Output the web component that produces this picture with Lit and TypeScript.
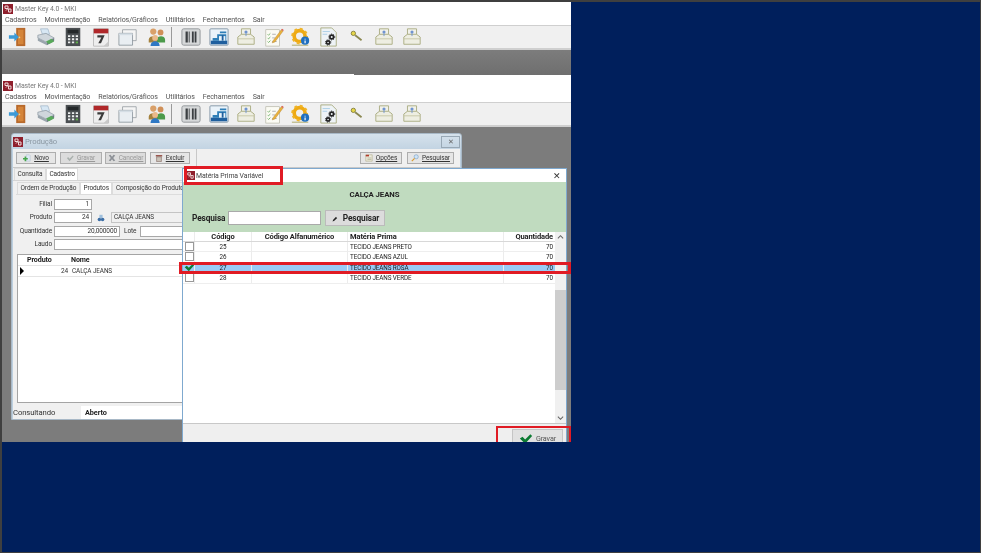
import { LitElement, html, css } from 'lit';
import { customElement } from 'lit/decorators.js';

const logo = html`<svg class="logo" viewBox="0 0 10 10">
  <rect width="10" height="10" fill="#8f1f2c"></rect>
  <path d="M2 2h3v2.500h-3zM5.500 5h2.500v3h-2.500zM3 6.500l2-2 1 1" fill="none" stroke="#f0dcdc" stroke-width="1"></path>
</svg>`;

const box = html`<svg class="wide-ic" viewBox="0 0 22 22">
  <path d="M6 2h10v7h-10z" fill="#f1f1ea" stroke="#a9ab80"></path>
  <path d="M2 11l4-3h10l4 3v8h-18z" fill="#eeeee2" stroke="#a9ab80"></path>
  <path d="M2 13h18" stroke="#c4c5a5"></path>
  <circle cx="11" cy="5.500" r="1.700" fill="#6f93d0"></circle>
  <path d="M11 7v3" stroke="#6f93d0"></path>
</svg>`;

const icons = [
  html`<svg viewBox="0 0 22 22">
    <path d="M9 1h10v20h-10z" fill="#b86a2c"></path>
    <path d="M11 3h6v16h-6z" fill="#d5853a"></path>
    <circle cx="12.500" cy="11.500" r="1" fill="#f2d08a"></circle>
    <path d="M1 9h6v-3l5 5-5 5v-3h-6z" fill="#3d9ad6"></path>
  </svg>`,
  html`<svg viewBox="0 0 22 22">
    <path d="M5 2h8l2 6h-8z" fill="#d7e7f4" stroke="#8aa3b8" stroke-width=".6"></path>
    <path d="M2 9l9-2 9 5-8 5-10-5z" fill="#cfd6dc" stroke="#77848f" stroke-width=".6"></path>
    <path d="M2 12l10 5v3l-10-5z" fill="#9aa5ad"></path>
    <path d="M12 17l8-5v3l-8 5z" fill="#6e7b84"></path>
    <path d="M11 16l6-3 3 3-6 3z" fill="#58a95a"></path>
  </svg>`,
  html`<svg viewBox="0 0 22 22">
    <rect x="3" y="1" width="16" height="20" fill="#4b4f52"></rect>
    <rect x="5" y="3" width="12" height="4" fill="#24282a"></rect>
    <path d="M5.500 9h2.500v2h-2.500zM9.800 9h2.500v2h-2.500zM14 9h2.500v2h-2.500zM5.500 12.500h2.500v2h-2.500zM9.800 12.500h2.500v2h-2.500zM14 12.500h2.500v2h-2.500zM5.500 16h2.500v2h-2.500zM9.800 16h2.500v2h-2.500z" fill="#eceeee"></path>
    <path d="M14 16h2.500v2h-2.500z" fill="#5fb04a"></path>
  </svg>`,
  html`<svg viewBox="0 0 22 22">
    <rect x="3" y="2" width="16" height="19" fill="#eeeeee" stroke="#9a9a9a" stroke-width=".6"></rect>
    <rect x="3" y="2" width="16" height="5" fill="#b0282a"></rect>
    <path d="M7 9h8l-4 9h-3l3.400-6.500h-4.400z" fill="#3a3a3a"></path>
    <path d="M14 21l5-5v5z" fill="#c9c9c9"></path>
  </svg>`,
  html`<svg viewBox="0 0 22 22">
    <path d="M5 3h15v12h-15z" fill="#f5f5f5" stroke="#8d9499" stroke-width=".8"></path>
    <path d="M1 7h15v13h-15z" fill="#e9eef2" stroke="#7c8790" stroke-width=".8"></path>
    <path d="M1 7h15v2h-15z" fill="#d5dee5"></path>
  </svg>`,
  html`<svg viewBox="0 0 22 22">
    <circle cx="8" cy="5" r="3.400" fill="#d9a069"></circle>
    <path d="M3 14c0-5 10-5 10 0v3h-10z" fill="#a4813c"></path>
    <circle cx="16" cy="6" r="3.200" fill="#cf8f58"></circle>
    <path d="M12 14c0-5 9-5 9 0v3h-9z" fill="#4c9a4b"></path>
    <circle cx="10" cy="12" r="3.200" fill="#eab98a"></circle>
    <path d="M5 21c0-7 10-7 10 0z" fill="#2f78c4"></path>
  </svg>`,
  null,
  html`<svg viewBox="0 0 22 22">
    <rect x="1" y="2" width="20" height="18" rx="2" fill="#d6d8d9" stroke="#8e9396"></rect>
    <path d="M5 5h2.500v12h-2.500zM8.500 5h1v12h-1zM12 5h2v12h-2zM15 5h2v12h-2z" fill="#3b3f42"></path>
  </svg>`,
  html`<svg viewBox="0 0 22 22">
    <rect x="1" y="2" width="20" height="18" rx="1" fill="#eaf3fa" stroke="#7f93a3"></rect>
    <path d="M2 15h18v4h-18z" fill="#1f5f9e"></path>
    <path d="M4 15v-3h5v-4h10v7zM12 5h7v2h-7z" fill="#2f7fb8"></path>
    <path d="M11 10h7v5h-7z" fill="#eaf3fa"></path>
    <path d="M14 9v6h2v-6z" fill="#1f5f9e"></path>
  </svg>`,
  box,
  html`<svg viewBox="0 0 22 22">
    <rect x="2" y="3" width="15" height="18" fill="#fbfbf4" stroke="#b0b0a0" stroke-width=".7"></rect>
    <path d="M4 8l1 1 2-2M4 12l1 1 2-2M4 16l1 1 2-2" fill="none" stroke="#5fa55a" stroke-width=".9"></path>
    <path d="M9 8h4M9 12h3M9 16h5" stroke="#9a9a9a" stroke-width=".8"></path>
    <path d="M10 15l9-12 2 1.500-9 12-3 1z" fill="#e9b23c" stroke="#a9772a" stroke-width=".4"></path>
    <path d="M19 3l2 1.500 .8-1.200-2-1.500z" fill="#d8574e"></path>
  </svg>`,
  html`<svg viewBox="0 0 22 22">
    <circle cx="9.500" cy="10" r="6" fill="none" stroke="#eeaa14" stroke-width="4"></circle>
    <circle cx="9.500" cy="10" r="8" fill="none" stroke="#f0b428" stroke-width="2.400" stroke-dasharray="3 3.280"></circle>
    <path d="M1 20h18" stroke="#a9a560" stroke-width="1"></path>
    <circle cx="15.500" cy="15" r="4.500" fill="#1f6fc0"></circle>
    <path d="M15.500 12.800v1M15.500 14.800v3" stroke="#fff" stroke-width="1.300"></path>
  </svg>`,
  html`<svg viewBox="0 0 22 22">
    <path d="M2 1h12l5 5v15h-17z" fill="#eef3f6" stroke="#a9ab80"></path>
    <path d="M4 5h8M4 8h5" stroke="#a9cde6"></path>
    <circle cx="14" cy="11" r="2" fill="none" stroke="#222" stroke-width="1.800"></circle>
    <circle cx="14" cy="11" r="3.300" fill="none" stroke="#222" stroke-width="1" stroke-dasharray="1.200 1.200"></circle>
    <circle cx="10" cy="17" r="1.800" fill="none" stroke="#222" stroke-width="1.800"></circle>
    <circle cx="10" cy="17" r="3" fill="none" stroke="#222" stroke-width="1" stroke-dasharray="1.200 1.200"></circle>
  </svg>`,
  html`<svg viewBox="0 0 22 22">
    <circle cx="7" cy="7" r="2.400" fill="#e6d64a" stroke="#6e6a2a" stroke-width=".8"></circle>
    <path d="M9 9l7 5.500" stroke="#8a8750" stroke-width="2"></path>
  </svg>`,
  box,
  box,
];

const pencil = html`<svg class="ic" viewBox="0 0 12 12">
  <path d="M1 11l1-3 5-5 2 2-5 5z" fill="#222"></path>
  <path d="M7 3l2-2 2 2-2 2z" fill="#ddd"></path>
</svg>`;

const check = html`<svg viewBox="0 0 16 12"><path d="M1 6l3-2 3 3 6-6 2 2-8 9z" fill="#0c7b32"></path></svg>`;

const chevron = (d: string) => html`<svg class="chev" viewBox="0 0 8 8">
  <path d=${d} fill="none" stroke="#666" stroke-width="1.200"></path>
</svg>`;

const btnIcons = {
  novo: html`<svg viewBox="0 0 10 10">
    <path d="M4 1h4l1 1v7h-5z" fill="#dce8f3" stroke="#a3b4c3" stroke-width=".5"></path>
    <path d="M0 5h2v-2h2v2h2v2h-2v2h-2v-2h-2z" fill="#45a54a"></path>
  </svg>`,
  gravar: html`<svg viewBox="0 0 10 10"><path d="M1 5l2-1 1.500 2 4-4 1 1-5 6z" fill="#a9b0ad"></path></svg>`,
  cancelar: html`<svg viewBox="0 0 10 10">
    <path d="M1 2l2-1 2 2.500 2-2.500 2 1-2.500 3 2.500 3-2 1-2-2.500-2 2.500-2-1 2.500-3z" fill="#8c9096"></path>
  </svg>`,
  excluir: html`<svg viewBox="0 0 10 10">
    <path d="M1 1.500h8v1.500h-8z" fill="#8a3328"></path>
    <path d="M2 3.500h6v6h-6z" fill="#c9c2b8" stroke="#6b4a42" stroke-width=".6"></path>
  </svg>`,
  opcoes: html`<svg viewBox="0 0 10 10">
    <path d="M1 1h8v8h-8z" fill="#ecebdc" stroke="#a39f73" stroke-width=".6"></path>
    <path d="M1 1h4v2h-4z" fill="#b23a2c"></path>
    <path d="M3 5h5M3 7h5" stroke="#8e8b66" stroke-width=".6"></path>
  </svg>`,
  pesquisar: html`<svg viewBox="0 0 10 10">
    <circle cx="6.500" cy="3.500" r="2.600" fill="#cfe4f6" stroke="#6b97c2" stroke-width=".7"></circle>
    <path d="M4.500 5.500l-3.500 3.500" stroke="#d99a2b" stroke-width="1.400"></path>
  </svg>`,
};

@customElement('main-bar')
class MainBar extends LitElement {
  static styles = css`
    :host {
      display: block;
      background: #fff;
    }
    :host(.second) {
      padding-top: 4px;
    }
    .title {
      display: flex;
      align-items: center;
      gap: 2px;
      height: 12px;
      padding: 1px 0 0 1px;
      box-sizing: border-box;
      color: #7a7a7a;
      font-size: 6.900px;
    }
    .logo {
      width: 10px;
      height: 10px;
    }
    .menu {
      display: flex;
      gap: 8px;
      height: 11px;
      padding-left: 3px;
      align-items: center;
      color: #555;
      font-size: 7.100px;
    }
    .tools {
      display: flex;
      align-items: center;
      height: 22px;
      padding-left: 6px;
      gap: 7.600px;
      background: #f0f0f0;
      border-top: 1px solid #cfcfcf;
      border-bottom: 2px solid #cfcfcf;
    }
    .tools svg {
      width: 20px;
      height: 20px;
      flex: none;
    }
    .sep {
      width: 1px;
      height: 20px;
      margin: 0 1.400px 0 -2.600px;
      background: #9a9a9a;
      flex: none;
    }
  `;

  render() {
    return html`
      <div class="title">${logo}<span>Master Key 4.0 - MKI</span></div>
      <div class="menu">
        ${['Cadastros', 'Movimentação', 'Relatórios/Gráficos', 'Utilitários', 'Fechamentos', 'Sair'].map(
          (m) => html`<span>${m}</span>`
        )}
      </div>
      <div class="tools">
        ${icons.map((i) => (i ? i : html`<span class="sep"></span>`))}
      </div>
    `;
  }
}

@customElement('producao-window')
class ProducaoWindow extends LitElement {
  static styles = css`
    :host {
      display: flex;
      flex-direction: column;
      position: absolute;
      left: 9px;
      top: 6px;
      width: 451px;
      height: 287px;
      box-sizing: border-box;
      background: linear-gradient(#d6e2ec, #bccfdf 20px);
      border: 1px solid #a8b8c6;
      border-radius: 3px 3px 0 0;
      font-size: 6.500px;
      color: #333;
    }
    .head {
      display: flex;
      align-items: center;
      gap: 2px;
      height: 15px;
      padding: 0 1px 0 1px;
      color: #8b98a3;
      font-size: 7.700px;
    }
    .logo {
      width: 10px;
      height: 10px;
    }
    .close {
      margin-left: auto;
      width: 17px;
      height: 10px;
      border: 1px solid #98a8b5;
      text-align: center;
      line-height: 10px;
      font-size: 7px;
      color: #666;
    }
    .body {
      flex: 1;
      display: flex;
      flex-direction: column;
      min-height: 0;
      margin: 0 1px;
      background: #f0f0f0;
    }
    .actions {
      display: flex;
      gap: 3.500px;
      height: 19px;
      align-items: center;
      padding: 0 6px 0 3px;
      flex: none;
      box-sizing: border-box;
      border-bottom: 1px solid #c8c8c8;
    }
    .btn {
      display: flex;
      align-items: center;
      justify-content: center;
      gap: 3px;
      height: 12px;
      box-sizing: border-box;
      background: #e6e6e6;
      border: 1px solid #adadad;
      color: #333;
    }
    .btn.off {
      color: #999;
      background: #dcdcdc;
    }
    .btn svg {
      width: 8px;
      height: 8px;
    }
    .w40 {
      width: 40px;
    }
    .w41 {
      width: 41px;
    }
    .w42 {
      width: 42px;
    }
    .w47 {
      width: 47px;
      margin-left: 1.500px;
    }
    .vsep {
      width: 1px;
      height: 19px;
      background: #c8c8c8;
      margin-left: 3px;
    }
    .spacer {
      flex: 1;
    }
    .tabs {
      display: flex;
      flex: none;
      height: 12px;
      padding-left: 1px;
      box-sizing: border-box;
    }
    .tab {
      padding: 0 2.500px;
      border: 1px solid #dcdcdc;
      border-bottom: none;
      line-height: 10px;
      background: #f0f0f0;
    }
    .tab.on {
      background: #fff;
    }
    .page {
      flex: 1;
      display: flex;
      flex-direction: column;
      min-height: 0;
      background: #f0f0f0;
      border-top: 1px solid #d4d4d4;
      padding: 0 3px 3px;
    }
    .tabs.sub {
      height: 13px;
      padding-top: 1px;
    }
    .form {
      display: grid;
      flex: none;
      grid-template-columns: 36px 38px 1fr;
      grid-auto-rows: 11px;
      gap: 2.300px 2px;
      padding-top: 4px;
      border-top: 1px solid #dcdcdc;
    }
    .lab {
      text-align: right;
      line-height: 11px;
    }
    .in {
      box-sizing: border-box;
      height: 11px;
      background: #fff;
      border: 1px solid #a8a8a8;
      line-height: 9px;
      text-align: right;
      padding-right: 2px;
    }
    .row3 {
      display: flex;
      align-items: center;
      gap: 6px;
      padding-left: 3px;
    }
    .row3 svg {
      width: 8px;
      height: 8px;
      flex: none;
    }
    .ro {
      flex: 1;
      box-sizing: border-box;
      height: 11px;
      background: #f0f0f0;
      border: 1px solid #c4c4c4;
      line-height: 9px;
      padding-left: 2px;
      font-size: 6.400px;
    }
    .wide {
      grid-column: 2 / 4;
    }
    .qty {
      display: flex;
      gap: 4px;
      align-items: center;
      grid-column: 2 / 4;
    }
    .qty .in {
      width: 66px;
      flex: none;
    }
    .qty .in.fill {
      flex: 1;
    }
    .grid {
      flex: 1;
      margin: 4px 0 0 1px;
      background: #fff;
      border: 1px solid #a4a4a4;
    }
    .g-head,
    .g-row {
      display: grid;
      grid-template-columns: 9px 44px 1fr;
      height: 11px;
      line-height: 10px;
      box-sizing: border-box;
      border-bottom: 1px solid #e4e4e4;
    }
    .g-head {
      font-weight: 700;
      font-size: 7.100px;
      color: #222;
    }
    .g-num {
      text-align: right;
      padding-right: 3px;
    }
    .g-name {
      padding-left: 1px;
      font-size: 6.400px;
    }
    .arrow {
      width: 0;
      height: 0;
      margin: 1px 0 0 2px;
      border-left: 4px solid #000;
      border-top: 4px solid transparent;
      border-bottom: 4px solid transparent;
    }
    .status {
      display: grid;
      flex: none;
      grid-template-columns: 68px 1fr;
      height: 13px;
      line-height: 13px;
      font-size: 7.700px;
      background: #f0f0f0;
    }
    .status b {
      background: #fff;
      padding-left: 4px;
      font-size: 7.300px;
      color: #222;
    }
  `;

  render() {
    return html`
      <div class="head">${logo}<span>Produção</span><span class="close">✕</span></div>
      <div class="body">
        <div class="actions">
          <span class="btn w40">${btnIcons.novo}<u>Novo</u></span>
          <span class="btn off w42">${btnIcons.gravar}<u>Gravar</u></span>
          <span class="btn off w41">${btnIcons.cancelar}<u>Cancelar</u></span>
          <span class="btn w40">${btnIcons.excluir}<u>Excluir</u></span>
          <span class="vsep"></span>
          <span class="spacer"></span>
          <span class="btn w42">${btnIcons.opcoes}<u>Opções</u></span>
          <span class="btn w47">${btnIcons.pesquisar}<u>Pesquisar</u></span>
        </div>
        <div class="tabs"><span class="tab">Consulta</span><span class="tab on">Cadastro</span></div>
        <div class="page">
          <div class="tabs sub">
            <span class="tab">Ordem de Produção</span><span class="tab on">Produtos</span
            ><span class="tab">Composição do Produto</span>
          </div>
          <div class="form">
            <span class="lab">Filial</span><span class="in">1</span><span></span>
            <span class="lab">Produto</span><span class="in">24</span>
            <span class="row3">
              <svg viewBox="0 0 10 10">
                <circle cx="3" cy="7" r="2.200" fill="#3d6ea5"></circle>
                <circle cx="7" cy="7" r="2.200" fill="#3d6ea5"></circle>
                <path d="M3 1h4v4h-4z" fill="#9fc0dd"></path>
              </svg>
              <span class="ro">CALÇA JEANS</span>
            </span>
            <span class="lab">Quantidade</span>
            <span class="qty"><span class="in">20,000000</span><span>Lote</span><span class="in fill"></span></span>
            <span class="lab">Laudo</span><span class="in wide"></span>
          </div>
          <div class="grid">
            <div class="g-head"><span></span><span>Produto</span><span>Nome</span></div>
            <div class="g-row">
              <span class="arrow"></span><span class="g-num">24</span><span class="g-name">CALÇA JEANS</span>
            </div>
          </div>
        </div>
        <div class="status"><span>Consultando</span><b>Aberto</b></div>
      </div>
    `;
  }
}

const rows = [
  { cod: 25, nome: 'TECIDO JEANS PRETO' },
  { cod: 26, nome: 'TECIDO JEANS AZUL' },
  { cod: 27, nome: 'TECIDO JEANS ROSA', sel: true },
  { cod: 28, nome: 'TECIDO JEANS VERDE' },
];

@customElement('materia-dialog')
class MateriaDialog extends LitElement {
  static styles = css`
    :host {
      display: flex;
      flex-direction: column;
      position: absolute;
      left: 180px;
      top: 41px;
      width: 385px;
      height: 290px;
      box-sizing: border-box;
      background: #fff;
      border: 1px solid #7fa9cf;
      font-size: 6.300px;
      color: #222;
    }
    .head {
      display: flex;
      flex: none;
      align-items: center;
      gap: 1px;
      height: 13px;
      padding: 0 5px 0 3px;
      font-size: 6.900px;
      color: #444;
    }
    .logo {
      width: 9px;
      height: 9px;
    }
    .x {
      margin-left: auto;
      font-size: 9px;
      color: #333;
    }
    .green {
      flex: none;
      height: 50px;
      background: #c0dbbf;
      display: flex;
      flex-direction: column;
      align-items: center;
    }
    .green h1 {
      margin: 8px 0 0;
      font-size: 7.800px;
      line-height: 10px;
      font-weight: 700;
    }
    .search {
      align-self: flex-start;
      display: flex;
      align-items: center;
      gap: 3px;
      margin: 10px 0 0 9px;
      font-weight: 700;
      font-size: 8.300px;
    }
    .search .in {
      width: 93px;
      height: 14px;
      box-sizing: border-box;
      background: #fff;
      border: 1px solid #aaa;
    }
    .search .btn {
      display: flex;
      align-items: center;
      justify-content: center;
      gap: 4px;
      width: 60px;
      height: 16px;
      box-sizing: border-box;
      margin-left: 1px;
      background: #dcdcdc;
      border: 1px solid #bbb;
    }
    .ic {
      width: 7px;
      height: 7px;
    }
    .table {
      flex: 1;
      display: flex;
      min-height: 0;
    }
    .rows {
      flex: 1;
    }
    .r {
      display: grid;
      grid-template-columns: 12px 57px 96px 156px 51px;
      height: 10.500px;
      line-height: 10px;
      box-sizing: border-box;
      border-bottom: 1px solid #eee;
    }
    .r.th {
      font-weight: 700;
      font-size: 7.500px;
      height: 9.500px;
      line-height: 9px;
      border-bottom: 1px solid #d8d8d8;
    }
    .r.sel {
      background: #99cbf5;
    }
    .r > span {
      border-right: 1px solid #ececec;
      white-space: nowrap;
    }
    .r > span:last-child {
      border-right: none;
    }
    .c {
      text-align: center;
    }
    .n {
      padding-left: 2px;
    }
    .q {
      text-align: right;
      padding-right: 2px;
    }
    .box {
      display: block;
      box-sizing: border-box;
      width: 9px;
      height: 9px;
      margin-left: 2px;
      background: #fff;
      border: 1px solid #999;
    }
    .tick {
      display: block;
      width: 11px;
      height: 9px;
      margin-left: 1px;
    }
    .scroll {
      width: 11px;
      background: #f0f0f0;
      display: flex;
      flex-direction: column;
      align-items: center;
    }
    .chev {
      width: 7px;
      height: 11px;
      flex: none;
    }
    .scroll .thumb {
      width: 100%;
      height: 100px;
      margin-top: 47px;
      background: #cdcdcd;
    }
    .scroll .spacer {
      flex: 1;
    }
    .foot {
      flex: none;
      height: 34px;
      display: flex;
      justify-content: flex-end;
      background: #efefef;
      border-top: 1px solid #c8c8c8;
      padding: 5px 3px 0 0;
      box-sizing: border-box;
    }
    .gravar {
      display: flex;
      align-items: center;
      justify-content: center;
      gap: 3px;
      width: 51px;
      height: 18px;
      box-sizing: border-box;
      background: #e1e1e1;
      border: 1px solid #c5c5c5;
      color: #555;
      font-size: 7.200px;
    }
    .gravar svg {
      width: 14px;
      height: 11px;
    }
  `;

  render() {
    return html`
      <div class="head">${logo}<span>Matéria Prima Variável</span><span class="x">✕</span></div>
      <div class="green">
        <h1>CALÇA JEANS</h1>
        <div class="search">
          <span>Pesquisa</span><span class="in"></span>
          <span class="btn">${pencil}Pesquisar</span>
        </div>
      </div>
      <div class="table">
        <div class="rows">
          <div class="r th">
            <span></span><span class="c">Código</span><span class="c">Código Alfanumérico</span>
            <span class="n">Matéria Prima</span><span class="q">Quantidade</span>
          </div>
          ${rows.map(
            (r) => html`<div class="r ${r.sel ? 'sel' : ''}">
              <span>${r.sel ? html`<span class="tick">${check}</span>` : html`<span class="box"></span>`}</span>
              <span class="c">${r.cod}</span><span></span>
              <span class="n">${r.nome}</span><span class="q">70</span>
            </div>`
          )}
        </div>
        <div class="scroll">
          ${chevron('M1 5l3-3 3 3')}<span class="thumb"></span><span class="spacer"></span>${chevron('M1 3l3 3 3-3')}
        </div>
      </div>
      <div class="foot">
        <span class="gravar">${check}Gravar</span>
      </div>
    `;
  }
}

@customElement('app-root')
export class AppRoot extends LitElement {
  static styles = css`
    :host {
      display: block;
      width: 981px;
      height: 553px;
      box-sizing: border-box;
      background: #001f5c;
      border-style: solid;
      border-color: #3f3f3f;
      border-width: 2px 1px 1px 2px;
      font-family: Roboto, 'Liberation Sans', Arial, sans-serif;
      letter-spacing: -0.1px;
      overflow: hidden;
    }
    .screen {
      display: flex;
      flex-direction: column;
      width: 569px;
      height: 440px;
      background: #7c7c7c;
      overflow: hidden;
      filter: blur(0.35px);
    }
    .gap {
      display: flex;
      flex-direction: column;
      justify-content: flex-end;
      flex: none;
      height: 25px;
      box-sizing: border-box;
      background: linear-gradient(#7c7c7c, #6f6f6f);
    }
    .strip {
      width: 352px;
      height: 1px;
      background: #fff;
    }
    .desk {
      position: relative;
      flex: 1;
      min-height: 0;
    }
    .mark {
      position: absolute;
      box-sizing: border-box;
      border: 2px solid #e01b24;
    }
    .m-title {
      left: 182px;
      top: 39px;
      width: 99px;
      height: 19px;
      border-width: 3px;
    }
    .m-row {
      left: 177px;
      top: 135px;
      width: 392px;
      height: 12px;
      border-width: 3px;
    }
    .m-save {
      left: 494px;
      top: 299px;
      width: 75px;
      height: 30px;
    }
  `;

  render() {
    return html`
      <div class="screen">
        <main-bar></main-bar>
        <div class="gap"><div class="strip"></div></div>
        <main-bar class="second"></main-bar>
        <div class="desk">
          <producao-window></producao-window>
          <materia-dialog></materia-dialog>
          <div class="mark m-title"></div>
          <div class="mark m-row"></div>
          <div class="mark m-save"></div>
        </div>
      </div>
    `;
  }
}
